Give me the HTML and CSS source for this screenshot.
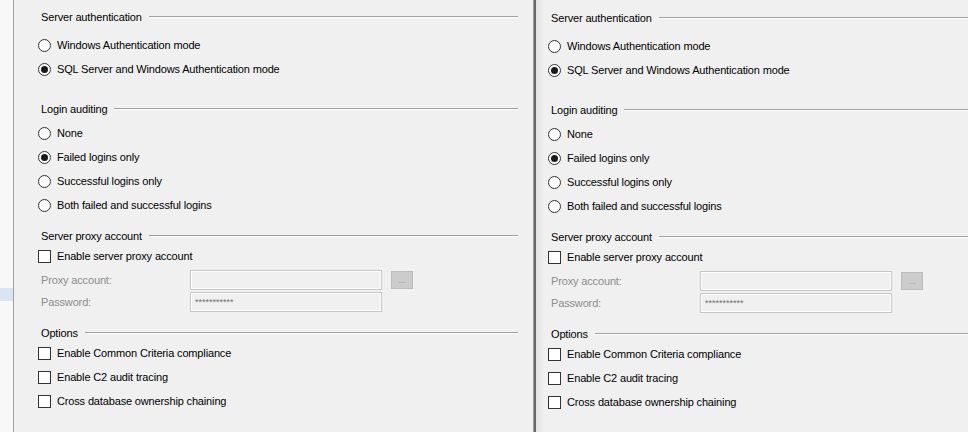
FILE: index.html
```html
<!DOCTYPE html>
<html lang="en">
<head>
	<meta charset="UTF-8">
	<title>Server Properties - Security</title>
	<link rel="stylesheet" href="styles.css">
</head>
<body>
	<div class="tree">
		<div class="tree-item selected"></div>
	</div>

	<div class="page">
		<section class="group g-auth">
			<div class="legend"><span>Server authentication</span></div>
			<label class="row"><span class="radio"></span>Windows Authentication mode</label>
			<label class="row"><span class="radio checked"></span>SQL Server and Windows Authentication mode</label>
		</section>
		<section class="group g-audit">
			<div class="legend"><span>Login auditing</span></div>
			<label class="row"><span class="radio"></span>None</label>
			<label class="row"><span class="radio checked"></span>Failed logins only</label>
			<label class="row"><span class="radio"></span>Successful logins only</label>
			<label class="row"><span class="radio"></span>Both failed and successful logins</label>
		</section>
		<section class="group g-proxy">
			<div class="legend"><span>Server proxy account</span></div>
			<label class="row"><span class="check"></span>Enable server proxy account</label>
			<div class="field">
				<span class="field-label">Proxy account:</span>
				<span class="input"></span>
				<span class="browse">...</span>
			</div>
			<div class="field">
				<span class="field-label">Password:</span>
				<span class="input"><span class="stars">***********</span></span>
			</div>
		</section>
		<section class="group g-options">
			<div class="legend"><span>Options</span></div>
			<label class="row"><span class="check"></span>Enable Common Criteria compliance</label>
			<label class="row"><span class="check"></span>Enable C2 audit tracing</label>
			<label class="row"><span class="check"></span>Cross database ownership chaining</label>
		</section>
	</div>

	<div class="divider"></div>

	<div class="page second">
		<section class="group g-auth">
			<div class="legend"><span>Server authentication</span></div>
			<label class="row"><span class="radio"></span>Windows Authentication mode</label>
			<label class="row"><span class="radio checked"></span>SQL Server and Windows Authentication mode</label>
		</section>
		<section class="group g-audit">
			<div class="legend"><span>Login auditing</span></div>
			<label class="row"><span class="radio"></span>None</label>
			<label class="row"><span class="radio checked"></span>Failed logins only</label>
			<label class="row"><span class="radio"></span>Successful logins only</label>
			<label class="row"><span class="radio"></span>Both failed and successful logins</label>
		</section>
		<section class="group g-proxy">
			<div class="legend"><span>Server proxy account</span></div>
			<label class="row"><span class="check"></span>Enable server proxy account</label>
			<div class="field">
				<span class="field-label">Proxy account:</span>
				<span class="input"></span>
				<span class="browse">...</span>
			</div>
			<div class="field">
				<span class="field-label">Password:</span>
				<span class="input"><span class="stars">***********</span></span>
			</div>
		</section>
		<section class="group g-options">
			<div class="legend"><span>Options</span></div>
			<label class="row"><span class="check"></span>Enable Common Criteria compliance</label>
			<label class="row"><span class="check"></span>Enable C2 audit tracing</label>
			<label class="row"><span class="check"></span>Cross database ownership chaining</label>
		</section>
	</div>
</body>
</html>
```

FILE: styles.css
```css
*{
	margin: 0;
	padding: 0;
	box-sizing: border-box;
}

body{
	display: flex;
	width: 968px;
	height: 432px;
	overflow: hidden;
	background-color: #f0f0f0;
	font-family: "Liberation Sans", Arial, sans-serif;
	font-size: 11px;
	letter-spacing: -0.15px;
	color: #000;
}

/* left tree strip */
.tree{
	width: 14px;
	flex: none;
	background-color: #f8f8f8;
	border-right: 1px solid #a0a0a0;
	padding-top: 288px;
}

.tree-item.selected{
	height: 13px;
	background-color: #d9e5f3;
}

.page{
	width: 519px;
	flex: none;
	padding: 2px 15px 0 24px;
}

.page.second{
	width: auto;
	flex: 1;
	padding: 3px 0 0 12px;
	background: linear-gradient(to right, #e2e2e2, #f0f0f0 8px);
}

.divider{
	width: 3px;
	flex: none;
	border-left: 1px solid #a0a0a0;
	background-color: #6a6a6a;
}

/* group boxes */
.legend{
	display: flex;
	align-items: center;
	height: 16px;
	padding-left: 3px;
}

.legend span{
	white-space: nowrap;
	padding-right: 7px;
}

.legend::after{
	content: "";
	flex: 1;
	border-top: 1px solid #a0a0a0;
	border-bottom: 1px solid #fff;
}

.g-auth{ margin-top: 7px; }
.g-auth .legend{ margin-bottom: 8px; }
.g-audit{ margin-top: 20px; }
.g-audit .legend{ margin-bottom: 4px; }
.g-proxy{ margin-top: 11px; }
.g-options{ margin-top: 13px; }

.row{
	display: flex;
	align-items: center;
	height: 24px;
	white-space: nowrap;
}

.radio{
	width: 13px;
	height: 13px;
	margin-right: 6px;
	border: 1px solid #333;
	border-radius: 50%;
	background-color: #fff;
	display: flex;
	align-items: center;
	justify-content: center;
}

.radio.checked::after{
	content: "";
	width: 7px;
	height: 7px;
	border-radius: 50%;
	background-color: #1a1a1a;
}

.check{
	width: 13px;
	height: 13px;
	margin-right: 6px;
	border: 1px solid #333;
	background-color: #fff;
}

/* proxy fields */
.field{
	display: flex;
	align-items: center;
	height: 20px;
	margin-top: 2px;
}

.field-label{
	width: 152px;
	padding-left: 3px;
	color: #8c8c8c;
}

.input{
	width: 192px;
	height: 20px;
	border: 1px solid #c6c6c6;
	box-shadow: inset 0 0 0 1px #fff;
	background-color: #f0f0f0;
	padding: 2px 0 0 4px;
}

.stars{
	font-size: 9px;
	letter-spacing: 0;
	color: #6f6f6f;
	line-height: 10px;
}

.browse{
	width: 22px;
	height: 18px;
	margin-left: 9px;
	background-color: #cccccc;
	border: 1px solid #bcbcbc;
	color: #9a9a9a;
	font-size: 9px;
	text-align: center;
	line-height: 17px;
}
```
